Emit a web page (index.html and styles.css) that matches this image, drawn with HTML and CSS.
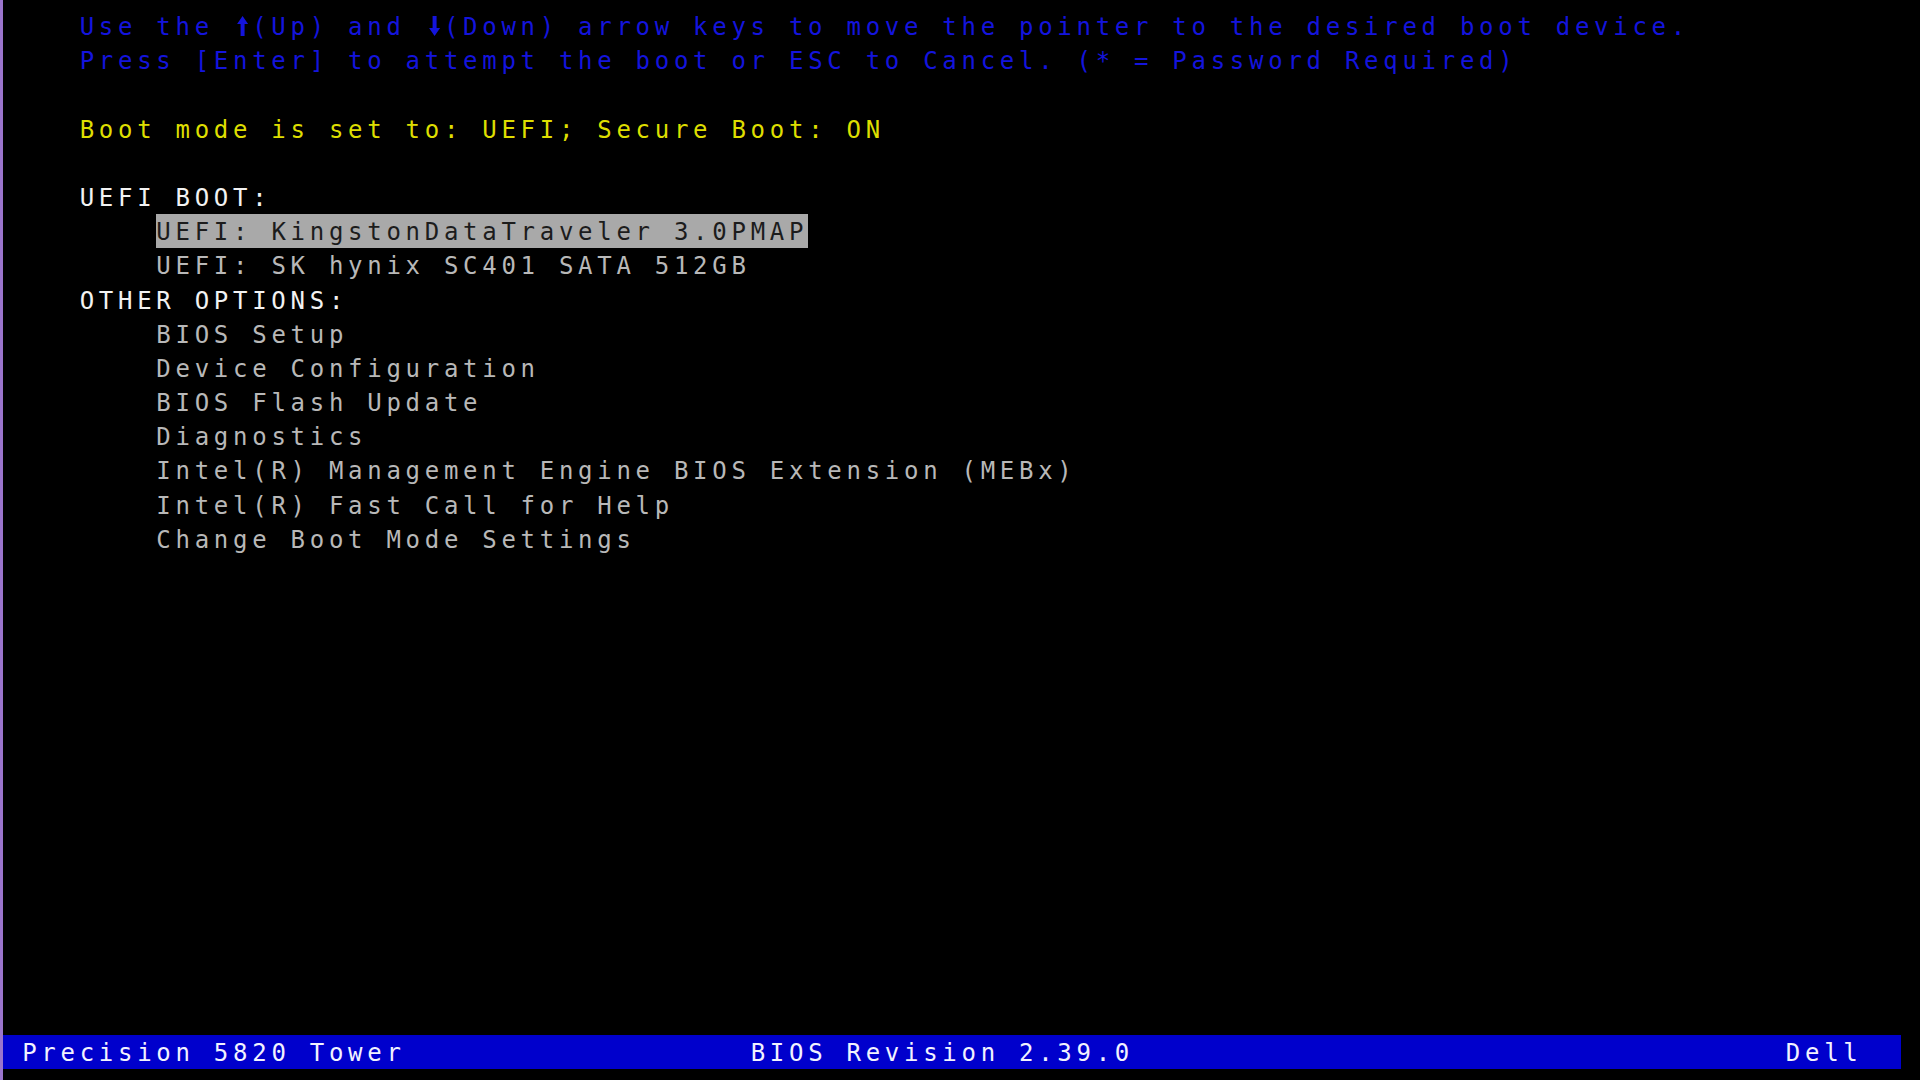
FILE: index.html
```html
<!DOCTYPE html>
<html lang="en">
<head>
    <meta charset="UTF-8">
    <title>Boot Menu</title>
    <link rel="stylesheet" href="styles.css">
</head>
<body>
    <div class="screen">
        <div class="menu">
            <div class="row hint">Use the <svg class="arrow" viewBox="0 0 19 24"><path d="M4 9 L9.5 1 L15 9 L11.5 9 L11.5 21 L7.5 21 L7.5 9 Z"/></svg>(Up) and <svg class="arrow" viewBox="0 0 19 24"><path d="M4 13 L9.5 21 L15 13 L11.5 13 L11.5 1 L7.5 1 L7.5 13 Z"/></svg>(Down) arrow keys to move the pointer to the desired boot device.</div>
            <div class="row hint">Press [Enter] to attempt the boot or ESC to Cancel. (* = Password Required)</div>
            <div class="row"></div>
            <div class="row mode">Boot mode is set to: UEFI; Secure Boot: ON</div>
            <div class="row"></div>
            <div class="row heading">UEFI BOOT:</div>
            <div class="row item"><span class="selected">UEFI: KingstonDataTraveler 3.0PMAP</span></div>
            <div class="row item">UEFI: SK hynix SC401 SATA 512GB</div>
            <div class="row heading">OTHER OPTIONS:</div>
            <div class="row item">BIOS Setup</div>
            <div class="row item">Device Configuration</div>
            <div class="row item">BIOS Flash Update</div>
            <div class="row item">Diagnostics</div>
            <div class="row item">Intel(R) Management Engine BIOS Extension (MEBx)</div>
            <div class="row item">Intel(R) Fast Call for Help</div>
            <div class="row item">Change Boot Mode Settings</div>
        </div>

        <!-- barra inferior, colunas fixas como no modo texto -->
        <div class="status-bar"> Precision 5820 Tower                  BIOS Revision 2.39.0                                  Dell</div>
    </div>
</body>
</html>
```

FILE: styles.css
```css
:root {
    --cell: 19.17px; /* largura de uma coluna de texto */
    --line: 34.2px;  /* altura de uma linha */
}
body {
    margin: 0;
    background-color: #000;
    overflow: hidden;
}
.screen {
    height: 1080px;
    box-sizing: border-box;
    border-left: 3px solid #9a74cc;
    padding: 9px 0 11px 0;
    display: flex;
    flex-direction: column;
    font-family: "DejaVu Sans Mono", "Liberation Mono", monospace;
    font-size: 24px;
    letter-spacing: calc(var(--cell) - 1ch);
}
.menu {
    flex: 1;
}
.row {
    height: var(--line);
    line-height: var(--line);
    padding-left: calc(var(--cell) * 4);
    box-sizing: border-box;
    padding-top: 1px;
    white-space: pre;
}
.hint {
    color: #1414dc;
}
.arrow {
    width: var(--cell);
    height: 24px;
    vertical-align: -4px;
    fill: currentColor;
}
.mode {
    color: #dede00;
}
.heading {
    color: #f2f2f2;
}
.item {
    padding-left: calc(var(--cell) * 8);
    color: #b8b8b8;
}
.selected {
    display: inline-block;
    height: var(--line);
    margin-top: -1px;
    padding-top: 1px;
    box-sizing: border-box;
    background-color: #a9a9a9;
    color: #1c1c1c;
    vertical-align: top;
}
.status-bar {
    width: calc(var(--cell) * 99);
    height: var(--line);
    line-height: var(--line);
    box-sizing: border-box;
    padding-top: 1px;
    background-color: #0000cc;
    color: #f2f2ff;
    white-space: pre;
}
```
